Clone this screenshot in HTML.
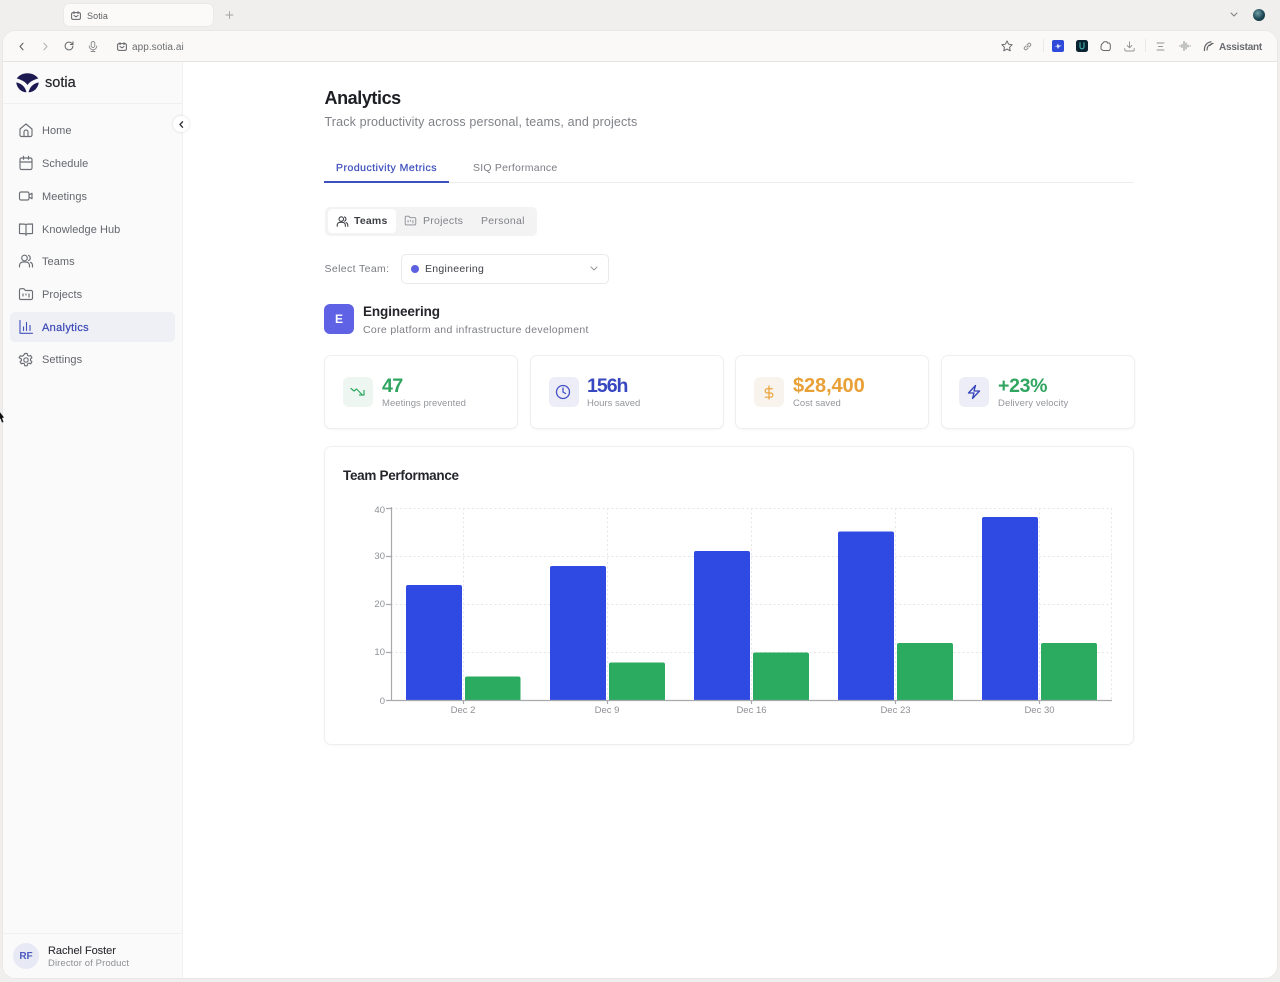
<!DOCTYPE html>
<html lang="en">
<head>
<meta charset="utf-8">
<title>Sotia</title>
<style>
html,body{margin:0;padding:0;width:1280px;height:982px;overflow:hidden;background:#f0efed;font-family:"Liberation Sans",Arial,sans-serif;}
#w{position:absolute;left:0;top:0;width:1280px;height:982px;overflow:hidden;filter:blur(.3px);}
.a{position:absolute;white-space:nowrap;}
svg.a{overflow:visible;}
.i{fill:none;stroke:currentColor;stroke-width:1.15;stroke-linecap:round;stroke-linejoin:round;}
.nav{font-size:11px;color:#63666d;letter-spacing:.05px;line-height:14px;left:42px;}
.ni{left:18px;width:16px;height:16px;color:#6c6f76;}
.card{background:#fff;border:1px solid #efeff0;border-radius:7px;box-shadow:0 1px 2px rgba(0,0,0,.04);box-sizing:border-box;height:74px;top:355px;width:194px;}
.ib{width:30px;height:30px;border-radius:6px;top:377px;}
.val{font-size:19.5px;font-weight:bold;top:374.5px;line-height:23px;}
.lab{font-size:9.5px;color:#94969b;top:397px;line-height:13px;letter-spacing:.03px;}
</style>
</head>
<body>
<div id="w">
<!-- browser tab bar -->
<div class="a" style="left:64px;top:4px;width:149px;height:22px;background:#fbfaf8;border-radius:5px;box-shadow:0 0 1px rgba(0,0,0,.15)"></div>
<svg class="a i" style="left:71px;top:11px;color:#5e6065;stroke-width:1" width="10" height="9" viewBox="0 0 10 9"><rect x=".6" y="1.6" width="8.8" height="6.8" rx="1.5"/><path d="M3 .6v2M7 .6v2M3 4.5l2 1.4 2-1.4"/></svg>
<div class="a" style="left:87px;top:10.5px;font-size:9px;line-height:11px;color:#5f6165;letter-spacing:.1px">Sotia</div>
<svg class="a i" style="left:225.5px;top:11px;color:#a3a3a0;stroke-width:.9" width="7" height="8" viewBox="0 0 7 8"><path d="M3.5 .5v7M0 4h7"/></svg>
<svg class="a i" style="left:1230px;top:12px;color:#7d7d7b;stroke-width:1" width="8" height="6" viewBox="0 0 8 6"><path d="M1 1l3 3 3-3"/></svg>
<div class="a" style="left:1253px;top:9px;width:12px;height:12px;border-radius:50%;background:radial-gradient(circle at 40% 35%,#6f9da5,#1d4654 55%,#0e2330)"></div>

<!-- window -->
<div class="a" style="left:3px;top:31px;width:1274px;height:947px;background:#fff;border-radius:12px;overflow:hidden;box-shadow:0 0 1px rgba(0,0,0,.18)">
  <div class="a" style="left:0;top:0;width:1274px;height:30px;background:#faf9f7;border-bottom:1px solid #e6e4e1"></div>
  <div class="a" style="left:0;top:31px;width:179px;height:916px;background:#fafafa;border-right:1px solid #f1f1f1"></div>
  <div class="a" style="left:0;top:72px;width:179px;height:1px;background:#f0f0f0"></div>
  <div class="a" style="left:0;top:902px;width:179px;height:1px;background:#f0f0f0"></div>
</div>

<!-- toolbar left -->
<svg class="a i" style="left:18.5px;top:42px;color:#606266;stroke-width:1.1" width="6" height="9" viewBox="0 0 6 9"><path d="M4 1.2L1 4.5 4 7.800"/></svg>
<svg class="a i" style="left:42px;top:42px;color:#b4b4b2;stroke-width:1.1" width="6" height="9" viewBox="0 0 6 9"><path d="M2 1.2l3 3.300-3 3.300"/></svg>
<svg class="a i" style="left:64px;top:41px;color:#66686b;stroke-width:1" width="10" height="10" viewBox="0 0 10 10"><path d="M8.9 5a3.900 3.900 0 1 1-1.200-2.800L9 3.400M9 .8v2.700H6.400"/></svg>
<svg class="a i" style="left:88px;top:41px;color:#85878a;stroke-width:.9" width="10" height="11" viewBox="0 0 10 11"><rect x="3.2" y=".5" width="3.600" height="6" rx="1.800"/><path d="M1.200 5a3.800 3.800 0 0 0 7.600 0M5 8.800v1.700M3 10.500h4"/></svg>
<svg class="a i" style="left:117px;top:42px;color:#5e6065;stroke-width:1" width="10" height="9" viewBox="0 0 10 9"><rect x=".6" y="1.600" width="8.800" height="6.800" rx="1.500"/><path d="M3 .6v2M7 .6v2M3 4.500l2 1.400 2-1.400"/></svg>
<div class="a" style="left:132px;top:40.5px;font-size:10px;line-height:13px;color:#6b6d70;letter-spacing:.05px">app.sotia.ai</div>

<!-- toolbar right -->
<svg class="a i" style="left:1001px;top:40px;color:#616367;stroke-width:.95" width="12" height="12" viewBox="0 0 12 12"><path d="M6 .9l1.600 3.300 3.600.5-2.600 2.500.6 3.600L6 9.100l-3.200 1.700.6-3.600L.8 4.700l3.600-.5z"/></svg>
<svg class="a i" style="left:1023px;top:42px;color:#87898b;stroke-width:.9" width="9" height="9" viewBox="0 0 9 9"><path d="M3.800 5.200l1.600-1.600M2.900 4L1.500 5.400a1.500 1.500 0 0 0 2.100 2.100L5 6.100M4 2.900l1.400-1.400a1.500 1.500 0 0 1 2.100 2.100L6.100 5"/></svg>
<div class="a" style="left:1043px;top:39px;width:1px;height:13px;background:#ebe9e6"></div>
<div class="a" style="left:1052px;top:40px;width:12px;height:12px;background:#2f49d8;border-radius:2px"></div>
<svg class="a" style="left:1054px;top:42px" width="8" height="8" viewBox="0 0 8 8"><path d="M0 4h2.500L4 1.500 4.800 3.500H8L5 5 4 7 3 4.800z" fill="#dfe5ff"/></svg>
<div class="a" style="left:1076px;top:40px;width:12px;height:12px;background:#0b2230;border-radius:2.5px"></div>
<svg class="a i" style="left:1079px;top:42px;color:#3cb4ae;stroke-width:1.1" width="6" height="8" viewBox="0 0 6 8"><path d="M1 .8v4a2 2 0 0 0 4 0v-4"/></svg>
<svg class="a i" style="left:1100px;top:40px;color:#64666a;stroke-width:1" width="11" height="12" viewBox="0 0 11 12"><path d="M1.500 4.500L4 1.800h3l.5 1.200h1.800l1 1.500v4.500l-1 1.500H3L1 9V6.500z"/></svg>
<svg class="a i" style="left:1124px;top:41px;color:#949492;stroke-width:.95" width="11" height="11" viewBox="0 0 11 11"><path d="M5.500 .8v6M3.200 4.500l2.300 2.300 2.300-2.300M.8 7.500v1.200a1.300 1.300 0 0 0 1.300 1.300h6.800a1.300 1.300 0 0 0 1.300-1.300V7.500"/></svg>
<div class="a" style="left:1145px;top:39px;width:1px;height:13px;background:#ebe9e6"></div>
<svg class="a i" style="left:1156px;top:42px;color:#949492;stroke-width:.95" width="9" height="9" viewBox="0 0 9 9"><path d="M1 1h7M2.500 4.500h4M1 8h7"/></svg>
<svg class="a i" style="left:1179px;top:40px;color:#87898b;stroke-width:.95" width="12" height="12" viewBox="0 0 12 12"><path d="M.7 6h.6M3 4.500v3M5 1.500v9M7 3v6M9 5v2M11 6h.3"/></svg>
<svg class="a i" style="left:1203px;top:40px;color:#606266;stroke-width:1.2" width="11" height="12" viewBox="0 0 11 12"><path d="M1.500 10.500C1 6 3.500 2.500 8 1.800M4 10C4 7 5.500 4.800 8.500 4.300M7 5.500c.5-1.500 1.500-2 3-2"/></svg>
<div class="a" style="left:1219px;top:40.5px;font-size:10px;font-weight:bold;line-height:13px;color:#696b70;letter-spacing:-.22px">Assistant</div>

<!-- logo -->
<svg class="a" style="left:16px;top:73px" width="23" height="20" viewBox="0 0 23 20"><path d="M.7 5.500C3 2 7 .2 11.500 .2S20 2 22.300 5.500C18 6.500 14 8.500 11.500 12 9 8.500 5 6.500 .7 5.500z" fill="#1d1a52"/><path d="M.2 9.500C4.500 10 9 13 10.500 19.300 5 19.300 1 15 .2 9.500z" fill="#1d1a52"/><path d="M22.800 9.500C18.500 10 14 13 12.500 19.300 18 19.300 22 15 22.800 9.500z" fill="#1d1a52"/></svg>
<div class="a" style="left:45px;top:75px;font-size:14.5px;line-height:17px;color:#26272c;-webkit-text-stroke:.2px #26272c">sotia</div>
<div class="a" style="left:173px;top:116px;width:16px;height:16px;border-radius:50%;background:#fff;box-shadow:0 0 3px rgba(0,0,0,.14)"></div>
<svg class="a i" style="left:178.5px;top:120.5px;color:#33353a;stroke-width:1.4" width="5" height="7" viewBox="0 0 5 7"><path d="M3.500 .8L1 3.500l2.500 2.700"/></svg>

<!-- nav -->
<div class="a" style="left:10px;top:312px;width:165px;height:30px;background:#eff0f6;border-radius:5px"></div>

<svg class="a i ni" style="top:122px" viewBox="0 0 16 16"><path d="M2 7l6-5 6 5v6a1.500 1.500 0 0 1-1.500 1.500h-9A1.500 1.500 0 0 1 2 13zM6 14.500V10a2 2 0 0 1 4 0v4.500"/></svg>
<div class="a nav" style="top:124px">Home</div>
<svg class="a i ni" style="top:155px" viewBox="0 0 16 16"><rect x="2" y="3" width="12" height="11.500" rx="1.500"/><path d="M5.500 1.300v3M10.500 1.300v3M2 7h12"/></svg>
<div class="a nav" style="top:156.5px">Schedule</div>
<svg class="a i ni" style="top:188px" viewBox="0 0 16 16"><rect x="1.500" y="4" width="9.500" height="8" rx="1.500"/><path d="M11 7l3-1.800v5.600L11 9"/></svg>
<div class="a nav" style="top:189.5px">Meetings</div>
<svg class="a i ni" style="top:221px" viewBox="0 0 16 16"><path d="M8 3.500C7 3 5.500 3 1.500 3v9.500c4 0 5.500 0 6.500.5 1-.5 2.500-.5 6.500-.5V3c-4 0-5.500 0-6.500.5zM8 3.500V14.500"/></svg>
<div class="a nav" style="top:222.5px">Knowledge Hub</div>
<svg class="a i ni" style="top:253px" viewBox="0 0 16 16"><circle cx="6.500" cy="5" r="2.800"/><path d="M1.500 14v-1.500A3.500 3.500 0 0 1 5 9h3a3.500 3.500 0 0 1 3.500 3.500V14M10.500 2.400a2.800 2.800 0 0 1 0 5.200M12.500 9.300a3.500 3.500 0 0 1 2 3.200V14"/></svg>
<div class="a nav" style="top:255px">Teams</div>
<svg class="a i ni" style="top:286px" viewBox="0 0 16 16"><path d="M1.500 4a1.300 1.300 0 0 1 1.300-1.300h3L7.500 4.500h5.700A1.300 1.300 0 0 1 14.500 5.800v6.400a1.300 1.300 0 0 1-1.300 1.300H2.800a1.300 1.300 0 0 1-1.300-1.300zM5 10V8M8 9V8M11 11V8"/></svg>
<div class="a nav" style="top:288px">Projects</div>
<svg class="a i ni" style="top:319px;color:#4453bb" viewBox="0 0 16 16"><path d="M2 1.500v12.800h12.500M5.500 11.500V8M8.500 11.500V3.500M12 11.500V6.500"/></svg>
<div class="a nav" style="top:320.5px;color:#3f4cb8;letter-spacing:.33px;-webkit-text-stroke:.25px #3f4cb8">Analytics</div>
<svg class="a i ni" style="top:352px" viewBox="0 0 16 16"><circle cx="8" cy="8" r="2.200"/><path d="M6.800 1.500h2.400l.4 1.900 1.300.7 1.800-.6 1.200 2.100-1.400 1.300v1.500l1.400 1.300-1.200 2.100-1.800-.6-1.300.7-.4 1.900H6.800l-.4-1.900-1.300-.7-1.800.6-1.200-2.100 1.400-1.300V7.100L1.100 5.800l1.200-2.100 1.800.6 1.300-.7z"/></svg>
<div class="a nav" style="top:353px">Settings</div>

<!-- user -->
<div class="a" style="left:13px;top:943px;width:26px;height:26px;border-radius:50%;background:#e7e9f5;color:#4e5ac0;font-size:10px;font-weight:bold;line-height:27px;text-align:center">RF</div>
<div class="a" style="left:48px;top:943.5px;font-size:11px;line-height:14px;color:#2c2d32;letter-spacing:-.05px;-webkit-text-stroke:.1px #2c2d32">Rachel Foster</div>
<div class="a" style="left:48px;top:957px;font-size:9.5px;line-height:13px;color:#8d8f94;letter-spacing:.1px">Director of Product</div>

<!-- heading -->
<div class="a" style="left:324.5px;top:86.5px;font-size:18px;font-weight:bold;line-height:23px;color:#1d1e23;letter-spacing:-.42px">Analytics</div>
<div class="a" style="left:324.5px;top:114px;font-size:12.5px;line-height:16px;color:#7f8187;letter-spacing:.14px">Track productivity across personal, teams, and projects</div>

<!-- tabs -->
<div class="a" style="left:324px;top:182px;width:810px;height:1px;background:#ededee"></div>
<div class="a" style="left:324px;top:181px;width:125px;height:2px;background:#3f50bd"></div>
<div class="a" style="left:336px;top:161.5px;font-size:10.5px;line-height:13px;color:#3f50bd;letter-spacing:.5px;-webkit-text-stroke:.25px #3f50bd">Productivity Metrics</div>
<div class="a" style="left:473px;top:161.5px;font-size:10.5px;line-height:13px;color:#7b7d83;letter-spacing:.22px">SIQ Performance</div>

<!-- segmented -->
<div class="a" style="left:325px;top:207px;width:212px;height:29px;background:#f3f3f4;border-radius:5px"></div>
<div class="a" style="left:328px;top:209px;width:68px;height:24px;background:#fff;border-radius:4px"></div>
<svg class="a i" style="left:336px;top:215px;color:#3d3f44;stroke-width:1.3" width="13" height="13" viewBox="0 0 16 16"><circle cx="6.500" cy="5" r="2.800"/><path d="M1.500 14v-1.500A3.500 3.500 0 0 1 5 9h3a3.500 3.500 0 0 1 3.500 3.500V14M10.500 2.400a2.800 2.800 0 0 1 0 5.200M12.500 9.300a3.500 3.500 0 0 1 2 3.200V14"/></svg>
<div class="a" style="left:354px;top:215px;font-size:10.5px;font-weight:bold;line-height:13px;color:#3d3f44;letter-spacing:.2px">Teams</div>
<svg class="a i" style="left:404px;top:214px;color:#888a90;stroke-width:1.1" width="13" height="13" viewBox="0 0 16 16"><path d="M1.500 4a1.300 1.300 0 0 1 1.300-1.300h3L7.500 4.500h5.700A1.300 1.300 0 0 1 14.500 5.800v6.400a1.300 1.300 0 0 1-1.300 1.300H2.800a1.300 1.300 0 0 1-1.300-1.300zM5 10V8M8 9V8M11 11V8"/></svg>
<div class="a" style="left:423px;top:215px;font-size:10.5px;line-height:13px;color:#808288;letter-spacing:.28px">Projects</div>
<div class="a" style="left:481px;top:215px;font-size:10.5px;line-height:13px;color:#808288;letter-spacing:.28px">Personal</div>

<!-- select -->
<div class="a" style="left:324.5px;top:262.5px;font-size:10.5px;line-height:13px;color:#7a7c82;letter-spacing:.37px">Select Team:</div>
<div class="a" style="left:401px;top:254px;width:208px;height:30px;box-sizing:border-box;background:#fff;border:1px solid #e9e9eb;border-radius:5px"></div>
<div class="a" style="left:411px;top:264.5px;width:8px;height:8px;border-radius:50%;background:#5b5fe0"></div>
<div class="a" style="left:425px;top:262.5px;font-size:10.5px;line-height:13px;color:#3f4147;letter-spacing:.28px">Engineering</div>
<svg class="a i" style="left:590px;top:266px;color:#94969b;stroke-width:1" width="8" height="5" viewBox="0 0 8 5"><path d="M1 1l3 3 3-3"/></svg>

<!-- team header -->
<div class="a" style="left:324px;top:304px;width:30px;height:30px;border-radius:6px;background:#5f62e4;color:#fff;font-size:12px;font-weight:bold;line-height:31px;text-align:center">E</div>
<div class="a" style="left:363px;top:303px;font-size:13.5px;font-weight:bold;line-height:17px;color:#24252a;letter-spacing:-.1px">Engineering</div>
<div class="a" style="left:363px;top:323.5px;font-size:10.5px;line-height:13px;color:#7c7e84;letter-spacing:.33px">Core platform and infrastructure development</div>

<!-- cards -->
<div class="a card" style="left:324px"></div>
<div class="a ib" style="left:343px;background:#edf6f0"></div>
<svg class="a i" style="left:350px;top:385px;color:#2fa862;stroke-width:1.2" width="16" height="14" viewBox="0 0 16 14"><path d="M1 3.500l3 2.500 2.500-2 5.500 5.500M14 5.500v4.500H9.500"/></svg>
<div class="a val" style="left:382px;color:#2fa55f;letter-spacing:-.5px">47</div>
<div class="a lab" style="left:382px">Meetings prevented</div>

<div class="a card" style="left:530px"></div>
<div class="a ib" style="left:549px;background:#ecedf7"></div>
<svg class="a i" style="left:555px;top:384px;color:#4452c6;stroke-width:1.3" width="16" height="16" viewBox="0 0 16 16"><circle cx="8" cy="8" r="6.500"/><path d="M8 4v4l2.500 1.500"/></svg>
<div class="a val" style="left:587px;color:#3848c0;letter-spacing:-1px">156h</div>
<div class="a lab" style="left:587px;letter-spacing:0">Hours saved</div>

<div class="a card" style="left:735px"></div>
<div class="a ib" style="left:754px;background:#f8f3ec"></div>
<svg class="a i" style="left:762px;top:385px;color:#eba43c;stroke-width:1.3" width="14" height="15" viewBox="0 0 14 16"><path d="M7 1v14M10.500 4H5.200a2.200 2.200 0 0 0 0 4.500h3.600a2.200 2.200 0 0 1 0 4.500H3"/></svg>
<div class="a val" style="left:793px;color:#e9a036;font-size:20px;letter-spacing:-.1px">$28,400</div>
<div class="a lab" style="left:793px">Cost saved</div>

<div class="a card" style="left:941px"></div>
<div class="a ib" style="left:959px;background:#ecedf7"></div>
<svg class="a i" style="left:966px;top:384px;color:#3342b8;stroke-width:1.3" width="16" height="16" viewBox="0 0 16 16"><path d="M9.500 1.500L2.500 9H8l-1.500 5.500L13.500 7H8z"/></svg>
<div class="a val" style="left:998px;color:#2fa55f;letter-spacing:-.3px">+23%</div>
<div class="a lab" style="left:998px;letter-spacing:.1px">Delivery velocity</div>

<!-- chart card -->
<div class="a" style="left:324px;top:446px;width:810px;height:299px;box-sizing:border-box;background:#fff;border:1px solid #efeff0;border-radius:7px;box-shadow:0 1px 2px rgba(0,0,0,.03)"></div>
<div class="a" style="left:343px;top:466.5px;font-size:13.5px;font-weight:bold;line-height:18px;color:#25262b;letter-spacing:-.3px">Team Performance</div>

<svg class="a" style="left:0;top:0" width="1280" height="982" viewBox="0 0 1280 982">
  <g stroke="#e6e6ea" stroke-width="1" stroke-dasharray="2 2.5" fill="none">
    <path d="M391 508.500H1112M391 556.500H1112M391 604.500H1112M391 652.500H1112"/>
    <path d="M463.500 508V700M607.500 508V700M751.500 508V700M895.500 508V700M1039.500 508V700M1111.500 508V700"/>
  </g>
  <g fill="#2f4ae2">
    <path d="M406 700V587a2 2 0 0 1 2-2h52a2 2 0 0 1 2 2V700z"/>
    <path d="M550 700V568a2 2 0 0 1 2-2h52a2 2 0 0 1 2 2V700z"/>
    <path d="M694 700V553a2 2 0 0 1 2-2h52a2 2 0 0 1 2 2V700z"/>
    <path d="M838 700V533.500a2 2 0 0 1 2-2h52a2 2 0 0 1 2 2V700z"/>
    <path d="M982 700V519a2 2 0 0 1 2-2h52a2 2 0 0 1 2 2V700z"/>
  </g>
  <g fill="#2aab5f">
    <path d="M465 700V678.500a2 2 0 0 1 2-2h51.500a2 2 0 0 1 2 2V700z"/>
    <path d="M609 700V664.500a2 2 0 0 1 2-2h52a2 2 0 0 1 2 2V700z"/>
    <path d="M753 700V654.500a2 2 0 0 1 2-2h52a2 2 0 0 1 2 2V700z"/>
    <path d="M897 700V645a2 2 0 0 1 2-2h52a2 2 0 0 1 2 2V700z"/>
    <path d="M1041 700V645a2 2 0 0 1 2-2h52a2 2 0 0 1 2 2V700z"/>
  </g>
  <path d="M391.500 507V700.500H1112M386 508.500h5M386 556.500h5M386 604.500h5M386 652.500h5M386 700.500h5M463.500 700v4M607.500 700v4M751.500 700v4M895.500 700v4M1039.500 700v4" stroke="#a8a9ad" stroke-width="1.2" fill="none"/>
  <g font-family="Liberation Sans, Arial, sans-serif" font-size="9.5" fill="#8e9095" text-anchor="end">
    <text x="385" y="513">40</text><text x="385" y="559">30</text><text x="385" y="607">20</text><text x="385" y="655">10</text><text x="385" y="704">0</text>
  </g>
  <g font-family="Liberation Sans, Arial, sans-serif" font-size="9.5" fill="#8e9095" text-anchor="middle">
    <text x="463" y="713">Dec 2</text><text x="607" y="713">Dec 9</text><text x="751.5" y="713">Dec 16</text><text x="895.5" y="713">Dec 23</text><text x="1039.5" y="713">Dec 30</text>
  </g>
</svg>

<!-- cursor -->
<svg class="a" style="left:0;top:411px" width="5" height="13" viewBox="0 0 5 13"><path d="M-1 0l5 6.500-2 .5 1.500 4-1.500.5-1.500-4-1.500 1z" fill="#111"/></svg>
</div>
</body>
</html>
